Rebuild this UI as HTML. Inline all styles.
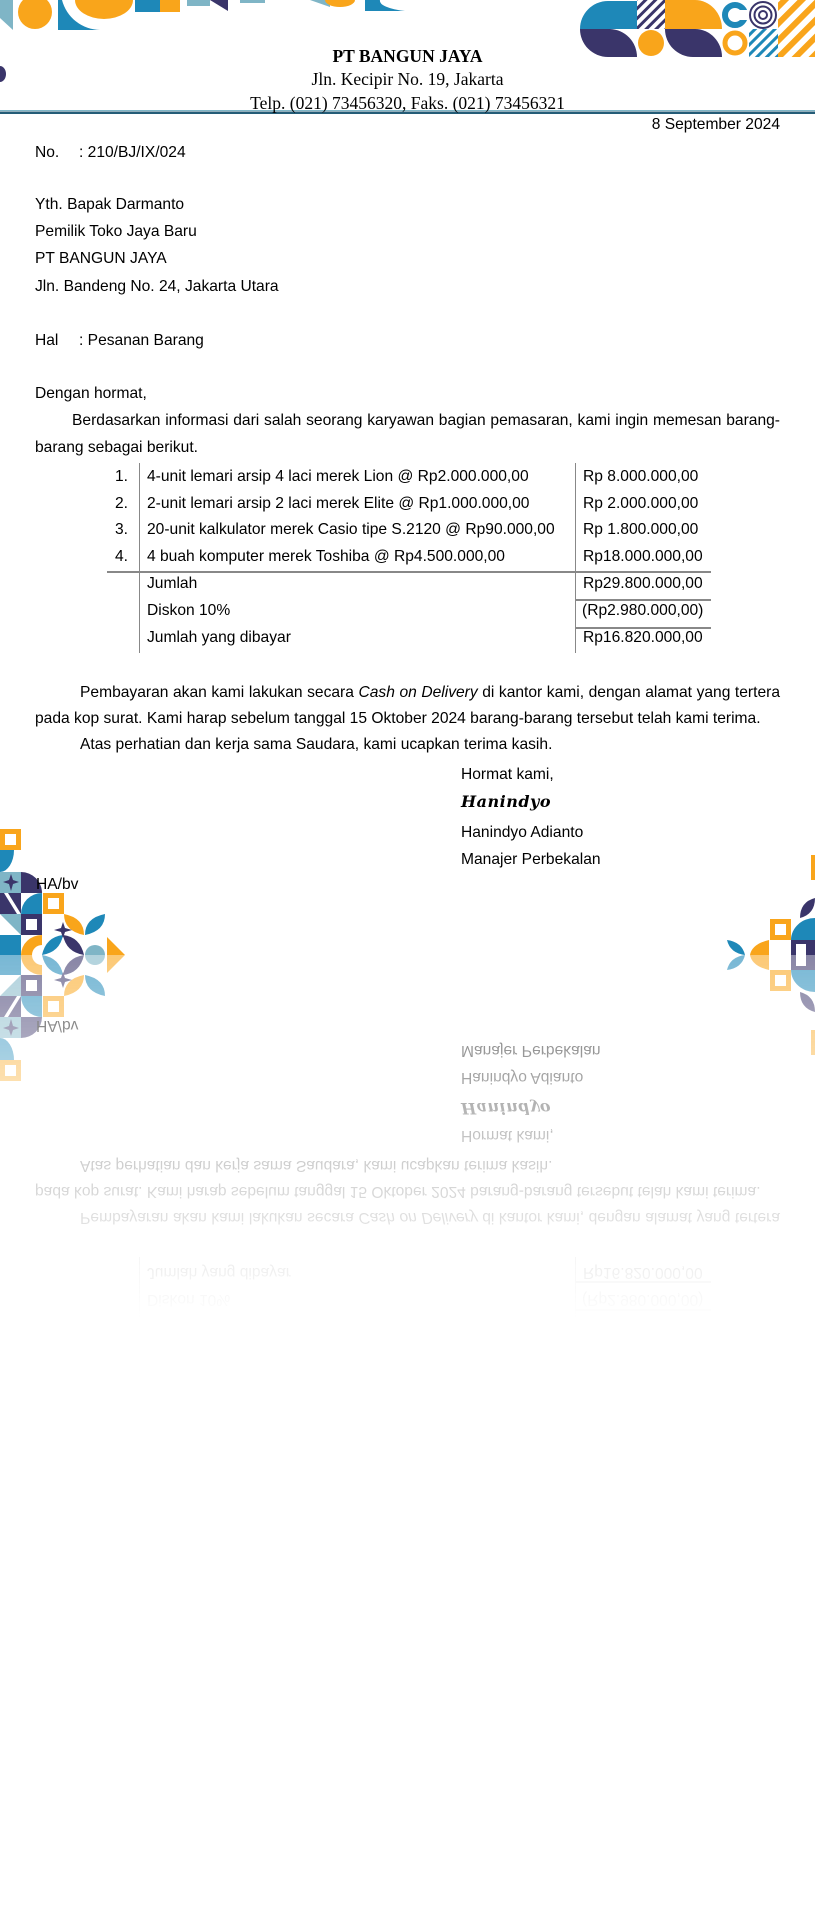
<!DOCTYPE html>
<html><head><meta charset="utf-8"><style>
html,body{margin:0;padding:0;background:#fff}
body{width:815px;height:1910px;position:relative;overflow:hidden}
.page{position:absolute;left:0;top:0;width:815px;height:955px;font-family:"Liberation Sans",Arial,sans-serif;font-size:15.6px;color:#000}
.l{position:absolute;line-height:18px;white-space:nowrap;margin-top:2px}
.hd{position:absolute;left:0;width:815px;text-align:center;font-family:"Liberation Serif",serif;font-size:17.5px;line-height:20px;margin-top:1px}
.refl{transform:scaleY(-1);transform-origin:0 955px;opacity:.6;
-webkit-mask-image:linear-gradient(to bottom,rgba(0,0,0,0) 0,rgba(0,0,0,0) 590px,rgba(0,0,0,.35) 760px,rgba(0,0,0,1) 955px);
mask-image:linear-gradient(to bottom,rgba(0,0,0,0) 0,rgba(0,0,0,0) 590px,rgba(0,0,0,.35) 760px,rgba(0,0,0,1) 955px)}
.j{position:absolute;left:35px;width:745px;text-align:justify;text-align-last:justify;line-height:18px;white-space:nowrap;margin-top:2px}
.vl{position:absolute;width:1px;background:#888}
.hl{position:absolute;height:1.5px;background:#888}
</style></head><body>
<div class="page" id="p">
<svg width="815" height="955" style="position:absolute;left:0;top:0">
<defs>
<pattern id="sn" width="7" height="7" patternUnits="userSpaceOnUse" patternTransform="rotate(45)"><rect width="3" height="7" fill="#3a356a"/></pattern>
<pattern id="sb" width="7" height="7" patternUnits="userSpaceOnUse" patternTransform="rotate(45)"><rect width="3" height="7" fill="#1e88b8"/></pattern>
<pattern id="so" width="12" height="12" patternUnits="userSpaceOnUse" patternTransform="rotate(45)"><rect width="6" height="12" fill="#f9a51b"/></pattern>
</defs>
<polygon points="0,0 13,0 13,30 0,18" fill="#7fb5c6"/>
<circle cx="35" cy="12" r="17" fill="#f9a51b"/>
<path d="M58,0 H100 V30 H58 Z" fill="#1e88b8"/>
<path d="M62,0 A40,40 0 0 0 100,30 H100 V0 Z" fill="#fff"/>
<path d="M75,0 A29,19 0 0 0 133,0 Z" fill="#f9a51b"/>
<rect x="135" y="0" width="25" height="12" fill="#1e88b8"/>
<rect x="160" y="0" width="20" height="12" fill="#f9a51b"/>
<rect x="187" y="0" width="23" height="6" fill="#7fb5c6"/>
<polygon points="210,0 228,0 228,11" fill="#3a356a"/>
<rect x="240" y="0" width="25" height="3" fill="#7fb5c6"/>
<polygon points="310,0 330,0 330,7" fill="#7fb5c6"/>
<path d="M325,0 A15,7 0 0 0 355,0 Z" fill="#f9a51b"/>
<path d="M365,0 V11 H405 A40,11 0 0 1 380,0 Z" fill="#1e88b8"/>
<path d="M580,29 A28,28 0 0 1 608,1 H637 V29 Z" fill="#1e88b8"/>
<path d="M580,29 H610 A28,28 0 0 1 637,57 H608 A28,28 0 0 1 580,29 Z" fill="#3a356a"/>
<rect x="637" y="0" width="28" height="29" fill="url(#sn)"/>
<circle cx="651" cy="43" r="13" fill="#f9a51b"/>
<path d="M665,0 H695 A27,29 0 0 1 722,29 H665 Z" fill="#f9a51b"/>
<path d="M665,29 H695 A27,28 0 0 1 722,57 H693 A28,28 0 0 1 665,29 Z" fill="#3a356a"/>
<circle cx="735" cy="15" r="10" fill="none" stroke="#1e88b8" stroke-width="6"/>
<rect x="738" y="10" width="10" height="10" fill="#fff"/>
<circle cx="735" cy="43" r="10" fill="none" stroke="#f9a51b" stroke-width="5"/>
<circle cx="763" cy="15" r="13" fill="none" stroke="#3a356a" stroke-width="2"/>
<circle cx="763" cy="15" r="8.5" fill="none" stroke="#3a356a" stroke-width="2"/>
<circle cx="763" cy="15" r="4" fill="none" stroke="#3a356a" stroke-width="2"/>
<rect x="749" y="29" width="29" height="28" fill="url(#sb)"/>
<rect x="778" y="0" width="37" height="57" fill="url(#so)"/>
<path d="M0,66 A6,8 0 0 1 0,82 Z" fill="#3a356a"/>
<rect x="0" y="110" width="815" height="1" fill="#7fb5c6"/>
<rect x="0" y="111.5" width="815" height="2.5" fill="#245c77"/>
<rect x="0" y="829" width="21" height="21" fill="#f9a51b"/><rect x="5" y="834" width="11" height="11" fill="#fff"/>
<path d="M0,850 H14 A14,22 0 0 1 0,872 Z" fill="#1e88b8"/>
<rect x="0" y="872" width="21" height="21" fill="#7fb5c6"/>
<path d="M11,874 L13,880 L19,882 L13,884 L11,891 L9,884 L3,882 L9,880 Z" fill="#3a356a"/>
<path d="M21,872 A21,21 0 0 1 42,893 H21 Z" fill="#3a356a"/>
<rect x="0" y="893" width="21" height="21" fill="#3a356a"/><polygon points="4,893 8,893 21,914 17,914" fill="#fff"/>
<path d="M42,893 A21,21 0 0 0 21,914 H42 Z" fill="#1e88b8"/>
<rect x="43" y="893" width="21" height="21" fill="#f9a51b"/><rect x="48" y="898" width="11" height="11" fill="#fff"/>
<polygon points="0,914 21,914 21,935" fill="#7fb5c6"/>
<rect x="21" y="914" width="21" height="21" fill="#3a356a"/><rect x="26" y="919" width="11" height="11" fill="#fff"/>
<path d="M64,914 Q84,918 84,935 Q64,931 64,914 Z" fill="#f9a51b"/>
<path d="M105,914 Q85,918 85,935 Q105,931 105,914 Z" fill="#1e88b8"/>
<rect x="0" y="935" width="21" height="20" fill="#1e88b8"/>
<path d="M21,955 A21,20 0 0 1 42,935 V945 A10,10 0 0 0 32,955 Z" fill="#f9a51b"/>
<path d="M42,955 Q46,937 63,935 Q60,952 42,955 Z" fill="#1e88b8"/>
<path d="M84,955 Q80,937 63,935 Q66,952 84,955 Z" fill="#3a356a"/>
<path d="M63,922 L65,928 L72,930 L65,932 L63,938 L61,932 L54,930 L61,928 Z" fill="#3a356a"/>
<path d="M85,955 A10,10 0 0 1 105,955 Z" fill="#7fb5c6"/>
<polygon points="107,937 107,955 125,955" fill="#f9a51b"/>
<rect x="811" y="855" width="4" height="25" fill="#f9a51b"/>
<path d="M815,898 Q800,902 800,918 Q815,914 815,898 Z" fill="#3a356a"/>
<rect x="770" y="919" width="21" height="21" fill="#f9a51b"/><rect x="775" y="924" width="11" height="11" fill="#fff"/>
<path d="M791,940 A24,22 0 0 1 815,918 V940 Z" fill="#1e88b8"/>
<rect x="791" y="940" width="24" height="15" fill="#3a356a"/><rect x="796" y="944" width="10" height="11" fill="#fff"/>
<path d="M727,940 Q742,942 745,955 Q730,953 727,940 Z" fill="#1e88b8"/>
<path d="M769,940 Q752,944 750,955 H769 Z" fill="#f9a51b"/>
</svg>
<div class="hd" style="top:45px;font-weight:bold">PT BANGUN JAYA</div>
<div class="hd" style="top:68px">Jln. Kecipir No. 19, Jakarta</div>
<div class="hd" style="top:92px">Telp. (021) 73456320, Faks. (021) 73456321</div>
<div class="l" style="top:114px;right:35px">8 September 2024</div>
<div class="l" style="top:142px;left:35px">No.</div><div class="l" style="top:142px;left:79px">: 210/BJ/IX/024</div>
<div class="l" style="top:194px;left:35px">Yth. Bapak Darmanto</div>
<div class="l" style="top:221px;left:35px">Pemilik Toko Jaya Baru</div>
<div class="l" style="top:248px;left:35px">PT BANGUN JAYA</div>
<div class="l" style="top:276px;left:35px">Jln. Bandeng No. 24, Jakarta Utara</div>
<div class="l" style="top:330px;left:35px">Hal</div><div class="l" style="top:330px;left:79px">: Pesanan Barang</div>
<div class="l" style="top:383px;left:35px">Dengan hormat,</div>
<div class="j" style="top:410px;left:72px;width:708px">Berdasarkan informasi dari salah seorang karyawan bagian pemasaran, kami ingin memesan barang-</div>
<div class="l" style="top:437px;left:35px">barang sebagai berikut.</div>
<div class="l" style="top:466px;right:687px">1.</div>
<div class="l" style="top:493px;right:687px">2.</div>
<div class="l" style="top:519px;right:687px">3.</div>
<div class="l" style="top:546px;right:687px">4.</div>
<div class="l" style="top:466px;left:147px">4-unit lemari arsip 4 laci merek Lion @ Rp2.000.000,00</div>
<div class="l" style="top:493px;left:147px">2-unit lemari arsip 2 laci merek Elite @ Rp1.000.000,00</div>
<div class="l" style="top:519px;left:147px">20-unit kalkulator merek Casio tipe S.2120 @ Rp90.000,00</div>
<div class="l" style="top:546px;left:147px">4 buah komputer merek Toshiba @ Rp4.500.000,00</div>
<div class="l" style="top:573px;left:147px">Jumlah</div>
<div class="l" style="top:600px;left:147px">Diskon 10%</div>
<div class="l" style="top:627px;left:147px">Jumlah yang dibayar</div>
<div class="l" style="top:466px;left:583px">Rp 8.000.000,00</div>
<div class="l" style="top:493px;left:583px">Rp 2.000.000,00</div>
<div class="l" style="top:519px;left:583px">Rp 1.800.000,00</div>
<div class="l" style="top:546px;left:583px">Rp18.000.000,00</div>
<div class="l" style="top:573px;left:583px">Rp29.800.000,00</div>
<div class="l" style="top:600px;left:582px">(Rp2.980.000,00)</div>
<div class="l" style="top:627px;left:583px">Rp16.820.000,00</div>
<div class="vl" style="left:139px;top:463px;height:190px"></div>
<div class="vl" style="left:575px;top:463px;height:190px"></div>
<div class="hl" style="left:107px;top:571px;width:604px"></div>
<div class="hl" style="left:575px;top:599px;width:136px"></div>
<div class="hl" style="left:575px;top:627px;width:136px"></div>
<div class="j" style="top:682px;left:80px;width:700px">Pembayaran akan kami lakukan secara <i>Cash on Delivery</i> di kantor kami, dengan alamat yang tertera</div>
<div class="l" style="top:708px;left:35px">pada kop surat. Kami harap sebelum tanggal 15 Oktober 2024 barang-barang tersebut telah kami terima.</div>
<div class="l" style="top:734px;left:80px">Atas perhatian dan kerja sama Saudara, kami ucapkan terima kasih.</div>
<div class="l" style="top:764px;left:461px">Hormat kami,</div>
<div class="l" style="top:791px;left:461px;font-family:'DejaVu Serif',serif;font-style:italic;font-weight:bold;font-size:16px;letter-spacing:.5px">Hanindyo</div>
<div class="l" style="top:822px;left:461px">Hanindyo Adianto</div>
<div class="l" style="top:849px;left:461px">Manajer Perbekalan</div>
<div class="l" style="top:874px;left:36px">HA/bv</div>
</div>
<script>
var p=document.getElementById('p');var c=p.cloneNode(true);c.removeAttribute('id');c.className='page refl';document.body.appendChild(c);
</script>
</body></html>
